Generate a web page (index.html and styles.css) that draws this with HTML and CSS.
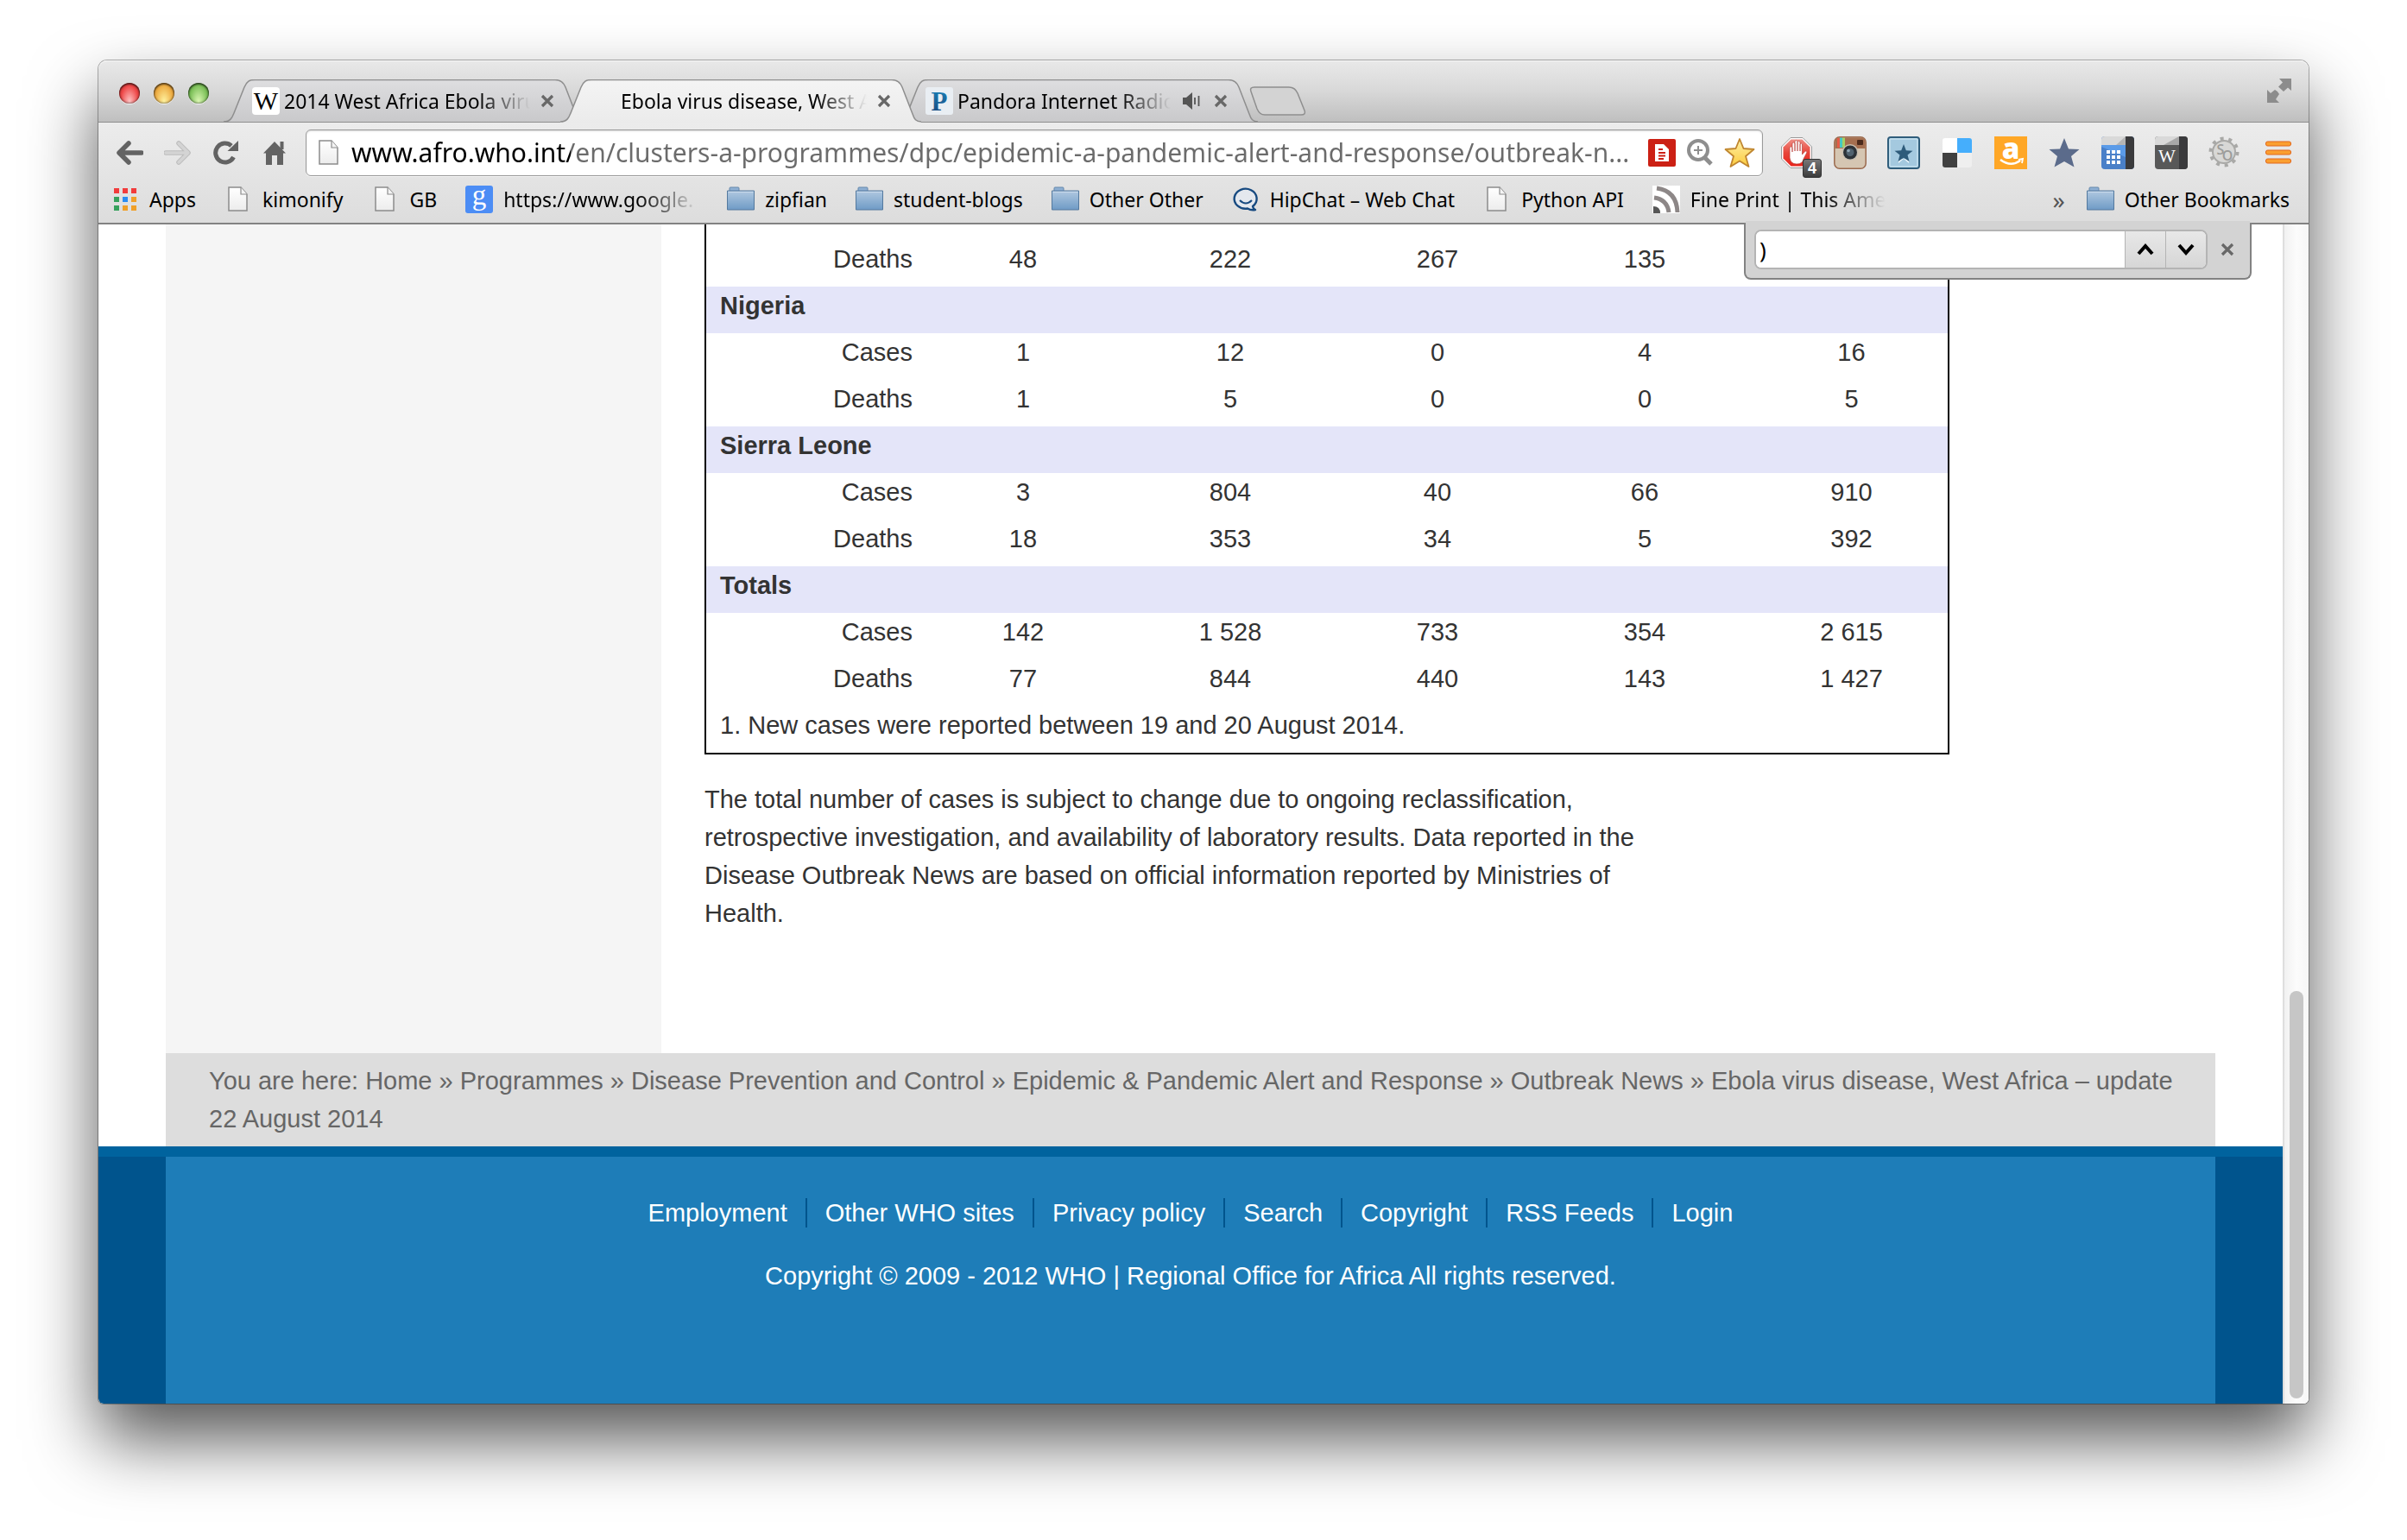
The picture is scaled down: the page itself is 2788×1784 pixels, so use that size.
FILE: index.html
```html
<!DOCTYPE html>
<html lang="en">
<head>
<meta charset="utf-8">
<title>Ebola virus disease, West Africa</title>
<link rel="stylesheet" href="styles.css">
</head>
<body>
<svg class="defs" width="0" height="0" aria-hidden="true">
  <defs>
    <linearGradient id="tabOff" x1="0" y1="0" x2="0" y2="1"><stop offset="0" stop-color="#dedee0"/><stop offset="1" stop-color="#c9c9cb"/></linearGradient>
    <linearGradient id="tabOn" x1="0" y1="0" x2="0" y2="1"><stop offset="0" stop-color="#f4f4f4"/><stop offset="1" stop-color="#ebebeb"/></linearGradient>
    <linearGradient id="folderFill" x1="0" y1="0" x2="0" y2="1"><stop offset="0" stop-color="#b0c8e0"/><stop offset="1" stop-color="#6f9bc6"/></linearGradient>
    <linearGradient id="pageFill" x1="0" y1="0" x2="0" y2="1"><stop offset="0" stop-color="#ffffff"/><stop offset="1" stop-color="#ececec"/></linearGradient>
    <linearGradient id="starFill" x1="0" y1="0" x2="0" y2="1"><stop offset="0" stop-color="#fff0a8"/><stop offset="1" stop-color="#fbcb3c"/></linearGradient>
    <linearGradient id="pandora" x1="0" y1="0" x2="0" y2="1"><stop offset="0" stop-color="#1a86bd"/><stop offset="1" stop-color="#1a4277"/></linearGradient>
    <linearGradient id="stopRed" x1="0" y1="0" x2="0" y2="1"><stop offset="0" stop-color="#ee8d85"/><stop offset=".5" stop-color="#e8453a"/><stop offset="1" stop-color="#e8231b"/></linearGradient>
    <symbol id="page" viewBox="0 0 32 32"><path d="M6 3h14l7 8v19H6z" transform="translate(-1 -1)" fill="url(#pageFill)" stroke="#8c8c8c" stroke-width="1.5"/><path d="M19 2v8h7" fill="#f4f4f4" stroke="#8c8c8c" stroke-width="1.2"/></symbol>
    <symbol id="folder" viewBox="0 0 32 32"><path d="M3 6V3q0-1 1-1h9q1 0 1 1v3" fill="#8fb0d3" stroke="#6487ab"/><path d="M.5 6h31v22H.5z" fill="url(#folderFill)" stroke="#54799e"/><path d="M1.500 7.500h29" stroke="#c9daeb"/></symbol>
    <symbol id="cross" viewBox="0 0 16 16"><path d="M2 2l12 12M14 2L2 14" stroke="#686868" stroke-width="3.200"/></symbol>
  </defs>
</svg>

<div class="window">
  <header class="chrome">
    <div class="tabstrip">
      <div class="lights">
        <button class="light red" aria-label="Close window"></button>
        <button class="light amber" aria-label="Minimize window"></button>
        <button class="light green" aria-label="Zoom window"></button>
      </div>
      <div class="tabs">
        <div class="tab">
          <svg class="tab-shape" viewBox="0 0 418 50" aria-hidden="true"><path d="M0 49C8 49 10 44 12 39L24 9C27 2 30 .5 36 .5H384C391 .5 394 4 396 9L408 40C410 46 412 49 418 49" fill="url(#tabOff)" stroke="#8e8e8e" stroke-width="1.500"/></svg>
          <svg class="favicon" viewBox="0 0 32 32" aria-hidden="true"><rect width="32" height="32" rx="4" fill="#fff"/><text x="16" y="26" text-anchor="middle" font-family="Liberation Serif, serif" font-size="30">W</text></svg>
          <span class="tab-title">2014 West Africa Ebola virus</span>
          <button class="tab-close" aria-label="Close tab"><svg viewBox="0 0 16 16"><use href="#cross"/></svg></button>
        </div>
        <div class="tab active">
          <svg class="tab-shape" viewBox="0 0 418 50" aria-hidden="true"><path d="M0 49C8 49 10 44 12 39L24 9C27 2 30 .5 36 .5H384C391 .5 394 4 396 9L408 40C410 46 412 49 418 49V50H0z" fill="url(#tabOn)"/><path d="M0 49C8 49 10 44 12 39L24 9C27 2 30 .5 36 .5H384C391 .5 394 4 396 9L408 40C410 46 412 49 418 49" fill="none" stroke="#8e8e8e" stroke-width="1.500"/></svg>
          <span class="favicon"></span>
          <span class="tab-title">Ebola virus disease, West Africa</span>
          <button class="tab-close" aria-label="Close tab"><svg viewBox="0 0 16 16"><use href="#cross"/></svg></button>
        </div>
        <div class="tab">
          <svg class="tab-shape" viewBox="0 0 418 50" aria-hidden="true"><path d="M0 49C8 49 10 44 12 39L24 9C27 2 30 .5 36 .5H384C391 .5 394 4 396 9L408 40C410 46 412 49 418 49" fill="url(#tabOff)" stroke="#8e8e8e" stroke-width="1.500"/></svg>
          <svg class="favicon" viewBox="0 0 32 32" aria-hidden="true"><rect width="32" height="32" rx="3" fill="#e9eef3"/><text x="16" y="27" text-anchor="middle" font-family="Liberation Serif, serif" font-weight="700" font-size="31" fill="url(#pandora)">P</text></svg>
          <span class="tab-title">Pandora Internet Radio</span>
          <svg class="speaker" viewBox="0 0 20 20" aria-label="Playing audio"><path d="M0 6h4l7-6v20l-7-6H0z" fill="#555"/><path d="M14 6v8M18.500 4v12" stroke="#555" stroke-width="1.800"/></svg>
          <button class="tab-close" aria-label="Close tab"><svg viewBox="0 0 16 16"><use href="#cross"/></svg></button>
        </div>
      </div>
      <button class="new-tab" aria-label="New tab"><svg viewBox="0 0 66 34"><path d="M6 1H46Q53 1 56 8L64 28Q66 33 60 33H18Q12 33 9 26L2 6Q0 1 6 1z" fill="#d3d3d3" stroke="#8e8e8e" stroke-width="1.500"/></svg></button>
      <button class="fullscreen" aria-label="Full screen"><svg viewBox="0 0 28 28"><path d="M14 0H28V14L24 10.500 19 15 13 9.500 18 4.500z" fill="#8c8c8c"/><path d="M14 28H0V13L4 17 9 13Q13 15 14 18L10 24z" fill="#8c8c8c"/></svg></button>
    </div>

    <div class="toolbar">
      <nav class="nav-buttons" aria-label="Navigation">
        <button class="tool" aria-label="Back"><svg viewBox="0 0 32 28"><path d="M15 3L4 14l11 11M5 14h25" fill="none" stroke="#636363" stroke-width="5.500" stroke-linecap="round" stroke-linejoin="round"/></svg></button>
        <button class="tool" aria-label="Forward"><svg viewBox="0 0 32 28"><path d="M17 3l11 11-11 11M27 14H2" fill="none" stroke="#bcbcbc" stroke-width="5.500" stroke-linecap="round" stroke-linejoin="round"/><path d="M17 3l11 11-11 11M27 14H2" fill="none" stroke="#d4d4d4" stroke-width="3.500" stroke-linecap="round" stroke-linejoin="round"/></svg></button>
        <button class="tool" aria-label="Reload"><svg viewBox="0 0 32 28"><path d="M24.500 19A11 11 0 1 1 22 5.800" fill="none" stroke="#636363" stroke-width="5"/><path d="M30 0v12H17.500z" fill="#636363"/></svg></button>
        <button class="tool" aria-label="Home"><svg viewBox="0 0 32 28"><path d="M16 1L29 14.500H26V28H19V17H13V28H6V14.500H3z" fill="#636363"/><path d="M22.500 1h4v9h-4z" fill="#636363"/></svg></button>
      </nav>
      <div class="omnibox">
        <svg class="site-icon" viewBox="0 0 32 32" aria-hidden="true"><use href="#page"/></svg>
        <input class="url" type="text" aria-label="Address" value="www.afro.who.int/en/clusters-a-programmes/dpc/epidemic-a-pandemic-alert-and-response/outbreak-n...">
        <svg class="omni-icon" viewBox="0 0 32 32" aria-hidden="true"><rect width="32" height="32" rx="2" fill="#cc2014"/><path d="M8 6h10l6 6v14H8z" fill="#fff"/><path d="M12 12h5M12 16h8M12 19.500h8M12 23h6" stroke="#cc2014" stroke-width="2"/></svg>
        <svg class="omni-icon" viewBox="0 0 32 32" aria-hidden="true"><circle cx="14" cy="13" r="11" fill="none" stroke="#8e8e8e" stroke-width="4"/><path d="M21 21l8 8" stroke="#8e8e8e" stroke-width="5"/><path d="M14 8v10M9 13h10" stroke="#8e8e8e" stroke-width="2"/></svg>
        <svg class="omni-star" viewBox="0 0 36 36" aria-hidden="true"><path d="M18 2l4.500 11 12 1-9.500 8 3.500 12L18 27.500 7.500 34 11 22 1.500 14l12-1z" fill="url(#starFill)" stroke="#c08630" stroke-width="1.800" stroke-linejoin="round"/></svg>
      </div>
      <div class="extensions">
        <button class="ext" aria-label="AdBlock"><svg viewBox="0 0 38 38"><path d="M12 1.500H26L36.500 12V26L26 36.500H12L1.500 26V12z" fill="#fff" stroke="#999"/><path d="M12.500 3.500H25.500L34.500 12.500V25.500L25.500 34.500H12.500L3.500 25.500V12.500z" fill="url(#stopRed)"/><path d="M11 13v12Q12 32 19 32T27 26L31 18.500Q29.500 16 28 18L25.500 21V9Q24 7 23 9V17 6.500Q21 4 20 6.500V17 5.500Q18 3.500 17 5.500V17 8Q15 6 14 8V18 13Q12 10.500 11 13z" fill="#fff" stroke="#b9413a" stroke-width=".7"/></svg><span class="badge">4</span></button>
        <button class="ext" aria-label="Instagram"><svg viewBox="0 0 38 38"><rect x=".8" y=".8" width="36.400" height="36.400" rx="6" fill="#d5c6b2" stroke="#9b6a4e" stroke-width="1.500"/><path d="M1.500 14V7q0-5.500 6-5.500h23q6 0 6 5.500v7z" fill="#a56f50"/><path d="M4 2h3v11H4z" fill="#e55a46"/><path d="M7 1.500h3V13H7z" fill="#46c8c4"/><path d="M10 1.500h3V13h-3z" fill="#a5d063"/><rect x="27" y="4" width="7" height="6" rx="1" fill="#4b2a1c"/><circle cx="19" cy="18.500" r="9.500" fill="#c7bfb2"/><circle cx="19" cy="18.500" r="8" fill="#2b3238"/><circle cx="19" cy="18.500" r="4.500" fill="#50626f"/><circle cx="17" cy="16.500" r="1.800" fill="#8fa6b5"/></svg></button>
        <button class="ext" aria-label="Bookmarks"><svg viewBox="0 0 38 38"><rect x="1" y="1" width="36" height="36" rx="3" fill="#a4c9df" stroke="#2f5d7b" stroke-width="2"/><rect x="3" y="3" width="32" height="32" rx="1" fill="none" stroke="#c5dfee" stroke-width="1.500"/><path d="M19 26l-6 5V26M19 26l6 5v-5" fill="#eaf4fa"/><path d="M19 9l2.800 7.300 7.700.4-6 4.800 2 7.500-6.500-4.200L12.500 29l2-7.500-6-4.800 7.700-.4z" fill="#2e5b7a"/></svg></button>
        <button class="ext" aria-label="Delicious"><svg viewBox="0 0 38 38"><path d="M5 2h14v17H2V5q0-3 3-3z" fill="#fff"/><path d="M19 2h14q3 0 3 3v14H19z" fill="#45aefc"/><path d="M2 19h17v17H5q-3 0-3-3z" fill="#404040"/><path d="M19 19h17v14q0 3-3 3H19z" fill="#efefef"/></svg></button>
        <button class="ext" aria-label="Amazon"><svg viewBox="0 0 38 38"><path d="M0 0h38v38H0z" fill="#ffa726"/><text x="19" y="26" text-anchor="middle" font-family="Open Sans, sans-serif" font-weight="800" font-size="33" fill="#fff">a</text><path d="M7 27q12 9 23 1" fill="none" stroke="#fff" stroke-width="2.500"/><path d="M28 27l5-1-1 5" fill="none" stroke="#fff" stroke-width="1.800"/></svg></button>
        <button class="ext" aria-label="Favorites"><svg viewBox="0 0 38 38"><path d="M19 2l5 12.500 12.500.5L27 23l3.500 12.500L19 29 7.500 35.500 11 23 1.500 15l12.500-.5z" fill="#5b6b8b"/></svg></button>
        <button class="ext" aria-label="Calendar"><svg viewBox="0 0 38 38"><rect width="38" height="38" rx="4" fill="#4a80c8"/><path d="M0 10h28v14L0 12z" fill="#5b9be8"/><path d="M4 0h24v10H0V4q0-4 4-4z" fill="#d9d9d9"/><path d="M17 10L28 0v10z" fill="#b5b5b5"/><path d="M28 0h6q4 0 4 4v30q0 4-4 4h-6z" fill="#3a3a3c"/><path d="M6 16h4v4H6zM12 16h4v4h-4zM18 16h4v4h-4zM6 22h4v4H6zM12 22h4v4h-4zM18 22h4v4h-4zM6 28h4v4H6zM12 28h4v4h-4zM18 28h4v4h-4z" fill="#fff"/></svg></button>
        <button class="ext" aria-label="Wikipedia"><svg viewBox="0 0 38 38"><rect width="38" height="38" rx="4" fill="#585858"/><path d="M4 0h24v10H0V4q0-4 4-4z" fill="#d9d9d9"/><path d="M10 10L28 0v10z" fill="#a8a8a8"/><path d="M28 0h6q4 0 4 4v30q0 4-4 4h-6z" fill="#3a3a3c"/><text x="14" y="30" text-anchor="middle" font-family="Liberation Serif, serif" font-size="21" fill="#fff">W</text></svg></button>
        <button class="ext" aria-label="Settings"><svg viewBox="0 0 38 38"><circle cx="18" cy="18" r="15.500" fill="none" stroke="#a9a9a7" stroke-width="4" stroke-dasharray="4 5.740"/><circle cx="18" cy="18" r="13" fill="#d8d8d6" stroke="#a9a9a7" stroke-width="2"/><text x="14" y="21" text-anchor="middle" font-family="Open Sans, sans-serif" font-weight="600" font-size="16" fill="#9c9c9a">S</text><text x="22" y="28" text-anchor="middle" font-family="Open Sans, sans-serif" font-weight="600" font-size="16" fill="#9c9c9a">O</text></svg></button>
      </div>
      <button class="menu" aria-label="Menu"><svg viewBox="0 0 30 28"><rect x=".5" y="1" width="29" height="5" rx="2" fill="#fa9f30" stroke="#e2661c"/><rect x=".5" y="11" width="29" height="5" rx="2" fill="#fa9f30" stroke="#e2661c"/><rect x=".5" y="21" width="29" height="5" rx="2" fill="#fa9f30" stroke="#e2661c"/></svg></button>
    </div>

    <nav class="bookmarks" aria-label="Bookmarks">
      <a class="bookmark" href="#"><svg viewBox="0 0 32 32" aria-hidden="true"><path d="M3 3h6v6H3zM13 3h6v6h-6zM23 3h6v6h-6z" fill="#f23b3b"/><path d="M3 13h6v6H3zM3 23h6v6H3z" fill="#36a15c"/><path d="M13 13h6v6h-6z" fill="#2b8cf2"/><path d="M23 13h6v6h-6zM13 23h6v6h-6zM23 23h6v6h-6z" fill="#f0a029"/></svg>Apps</a>
      <a class="bookmark" href="#"><svg viewBox="0 0 32 32" aria-hidden="true"><use href="#page"/></svg>kimonify</a>
      <a class="bookmark" href="#"><svg viewBox="0 0 32 32" aria-hidden="true"><use href="#page"/></svg>GB</a>
      <a class="bookmark" href="#"><svg viewBox="0 0 32 32" aria-hidden="true"><rect width="32" height="32" rx="3" fill="#4c8df5"/><text x="16" y="22" text-anchor="middle" font-family="Liberation Serif, serif" font-size="33" fill="#fff">g</text></svg><span class="fade">https://www.google.</span></a>
      <a class="bookmark" href="#"><svg viewBox="0 0 32 32" aria-hidden="true"><use href="#folder"/></svg>zipfian</a>
      <a class="bookmark" href="#"><svg viewBox="0 0 32 32" aria-hidden="true"><use href="#folder"/></svg>student-blogs</a>
      <a class="bookmark" href="#"><svg viewBox="0 0 32 32" aria-hidden="true"><use href="#folder"/></svg>Other Other</a>
      <a class="bookmark" href="#"><svg viewBox="0 0 32 32" aria-hidden="true"><path d="M24 24A13 11.500 0 1 0 18 26.500Q22 29 27 28 24.500 27 24 24z" fill="#e4e8ee" stroke="#174a80" stroke-width="2.400" stroke-linejoin="round"/><path d="M9 17q7 7 14 0" fill="none" stroke="#174a80" stroke-width="2"/></svg>HipChat – Web Chat</a>
      <a class="bookmark" href="#"><svg viewBox="0 0 32 32" aria-hidden="true"><use href="#page"/></svg>Python API</a>
      <a class="bookmark" href="#"><svg viewBox="0 0 32 32" aria-hidden="true"><path d="M0 0h32v32H0z" fill="#fff"/><path d="M5 3Q28 6 29 31M2 14Q17 16 19 31" fill="none" stroke="#8d8787" stroke-width="5"/><path d="M1 24q8 0 8 8H1z" fill="#555"/></svg><span class="fade">Fine Print | This American</span></a>
      <button class="overflow" aria-label="More bookmarks">»</button>
      <a class="bookmark" href="#"><svg viewBox="0 0 32 32" aria-hidden="true"><use href="#folder"/></svg>Other Bookmarks</a>
    </nav>

    <form class="findbar" role="search">
      <div class="find-group">
        <input class="find-input" type="text" aria-label="Find in page" value=")">
        <button class="find-step" type="button" aria-label="Previous"><svg viewBox="0 0 20 14"><path d="M2 12l8-9 8 9" fill="none" stroke="#000" stroke-width="4"/></svg></button>
        <button class="find-step" type="button" aria-label="Next"><svg viewBox="0 0 20 14"><path d="M2 2l8 9 8-9" fill="none" stroke="#000" stroke-width="4"/></svg></button>
      </div>
      <button class="find-close" type="button" aria-label="Close find bar"><svg viewBox="0 0 16 16"><use href="#cross"/></svg></button>
    </form>
  </header>

  <div class="viewport">
    <div class="site">
      <div class="columns">
        <aside class="sidebar"></aside>
        <main class="article">
          <table class="figures">
            <tbody>
              <tr class="first"><th scope="row">Deaths</th><td>48</td><td>222</td><td>267</td><td>135</td><td></td></tr>
              <tr class="country"><th scope="rowgroup" colspan="6">Nigeria</th></tr>
              <tr><th scope="row">Cases</th><td>1</td><td>12</td><td>0</td><td>4</td><td>16</td></tr>
              <tr><th scope="row">Deaths</th><td>1</td><td>5</td><td>0</td><td>0</td><td>5</td></tr>
              <tr class="country"><th scope="rowgroup" colspan="6">Sierra Leone</th></tr>
              <tr><th scope="row">Cases</th><td>3</td><td>804</td><td>40</td><td>66</td><td>910</td></tr>
              <tr><th scope="row">Deaths</th><td>18</td><td>353</td><td>34</td><td>5</td><td>392</td></tr>
              <tr class="country"><th scope="rowgroup" colspan="6">Totals</th></tr>
              <tr><th scope="row">Cases</th><td>142</td><td>1 528</td><td>733</td><td>354</td><td>2 615</td></tr>
              <tr><th scope="row">Deaths</th><td>77</td><td>844</td><td>440</td><td>143</td><td>1 427</td></tr>
              <tr class="note"><td colspan="6">1. New cases were reported between 19 and 20 August 2014.</td></tr>
            </tbody>
          </table>
          <p class="remark">The total number of cases is subject to change due to ongoing reclassification, retrospective investigation, and availability of laboratory results. Data reported in the Disease Outbreak News are based on official information reported by Ministries of Health.</p>
        </main>
      </div>
      <nav class="breadcrumb" aria-label="Breadcrumb">You are here: <a href="#">Home</a> » <a href="#">Programmes</a> » <a href="#">Disease Prevention and Control</a> » <a href="#">Epidemic &amp; Pandemic Alert and Response</a> » <a href="#">Outbreak News</a> » Ebola virus disease, West Africa – update 22 August 2014</nav>
      <footer class="footer">
        <div class="footer-inner">
          <ul class="footer-links">
            <li><a href="#">Employment</a></li>
            <li><a href="#">Other WHO sites</a></li>
            <li><a href="#">Privacy policy</a></li>
            <li><a href="#">Search</a></li>
            <li><a href="#">Copyright</a></li>
            <li><a href="#">RSS Feeds</a></li>
            <li><a href="#">Login</a></li>
          </ul>
          <p class="copyright">Copyright © 2009 - 2012 WHO | Regional Office for Africa All rights reserved.</p>
        </div>
      </footer>
    </div>
    <div class="scrollbar"><div class="thumb"></div></div>
  </div>
</div>
</body>
</html>
```

FILE: styles.css
```css
* { box-sizing: border-box; }

body {
  margin: 0;
  padding: 70px 114px 158px;
  background: #fff;
  font-family: "Liberation Sans", Arial, sans-serif;
  font-size: 29px;
  line-height: 44px;
  color: #333;
}

button {
  display: flex;
  align-items: center;
  justify-content: center;
  padding: 0;
  border: 0;
  background: none;
  font: inherit;
}

svg { display: block; flex: none; }
a { color: inherit; text-decoration: none; }
.defs { position: absolute; }

.window {
  border-radius: 10px 10px 6px 6px;
  box-shadow: 0 0 0 1px rgba(0, 0, 0, .3), 0 42px 80px rgba(0, 0, 0, .66);
}

/* Browser chrome */
.chrome {
  position: relative;
  z-index: 1;
  border-bottom: 2px solid #828282;
  border-radius: 10px 10px 0 0;
  background: linear-gradient(#ececec, #d3d3d3) 0 72px no-repeat;
  font-family: "Noto Sans", "Open Sans", sans-serif;
  font-size: 23px;
  line-height: 32px;
  color: #000;
}

.tabstrip {
  display: flex;
  align-items: flex-end;
  height: 72px;
  padding: 0 20px 0 24px;
  border-bottom: 1px solid #8e8e8e;
  border-radius: 10px 10px 0 0;
  background: linear-gradient(#e9e9e9, #d8d8d8 50%, #bfbfbf);
  box-shadow: inset 0 1px #f8f8f8;
}

.lights { display: flex; gap: 16px; margin: 0 17px 21px 0; }
.light {
  width: 24px;
  height: 24px;
  border-radius: 50%;
  box-shadow: inset 0 2px 2px rgba(0, 0, 0, .45), inset 0 0 2px 1px rgba(0, 0, 0, .4), 0 1px #f2f2f2;
}
.red { background: radial-gradient(ellipse at 50% 90%, #ffc4c4, #ee4848 60%, #c92d2d); }
.amber { background: radial-gradient(ellipse at 50% 90%, #fff3a0, #eeae45 60%, #c07a22); }
.green { background: radial-gradient(ellipse at 50% 90%, #dcf8b4, #7fc25b 60%, #4b8f30); }

.tabs { display: flex; margin-bottom: -1px; }
.tab {
  position: relative;
  isolation: isolate;
  display: flex;
  align-items: center;
  width: 418px;
  height: 50px;
  padding: 0 31px 0 33px;
}
.tab + .tab { margin-left: -28px; }
.tab.active { z-index: 1; }
.tab-shape { position: absolute; inset: 0; width: 418px; height: 50px; z-index: -1; }
.favicon { flex: none; width: 32px; height: 32px; margin-right: 5px; }
.tab-title {
  flex: 1;
  min-width: 0;
  overflow: hidden;
  white-space: nowrap;
  mask-image: linear-gradient(90deg, #000 calc(100% - 60px), transparent);
}
.speaker { width: 20px; height: 20px; margin: 0 4px 0 14px; }
.tab-close { width: 24px; height: 24px; margin-left: 8px; }
.tab-close svg { width: 16px; height: 16px; }

.new-tab { width: 66px; height: 34px; margin: 0 0 7px -10px; }
.new-tab svg { width: 66px; height: 34px; }
.fullscreen { width: 28px; height: 28px; margin: 0 0 22px auto; }
.fullscreen svg { width: 28px; height: 28px; }

.toolbar {
  display: flex;
  align-items: center;
  height: 69px;
  padding: 0 20px;
}
.nav-buttons { display: flex; gap: 24px; width: 220px; }
.tool svg { width: 32px; height: 28px; }
.omnibox {
  flex: 1;
  display: flex;
  align-items: center;
  min-width: 0;
  height: 54px;
  padding: 0 8px 0 10px;
  border: 1px solid #9a9a9a;
  border-radius: 6px;
  background: #fff;
  box-shadow: inset 0 1px 2px rgba(0, 0, 0, .15), 0 1px #f4f4f4;
}
.site-icon { width: 32px; height: 32px; margin-right: 10px; }
.url {
  flex: 1;
  min-width: 0;
  height: 44px;
  padding: 0;
  border: 0;
  outline: 0;
  font: 30px/44px "Noto Sans", "Open Sans", sans-serif;
  color: #666;
  background: linear-gradient(90deg, #000 254px, #6b6b6b 254px);
  background-clip: text;
  -webkit-background-clip: text;
  -webkit-text-fill-color: transparent;
}
.omni-icon { width: 32px; height: 32px; margin-right: 12px; }
.omni-star { width: 36px; height: 36px; }

.extensions { display: flex; gap: 24px; margin-left: 20px; }
.ext { position: relative; width: 38px; height: 38px; }
.ext svg { width: 38px; height: 38px; }
.badge {
  position: absolute;
  right: -10px;
  bottom: -10px;
  width: 22px;
  height: 22px;
  border: 1px solid #333;
  border-radius: 3px;
  background: linear-gradient(#777, #3c3c3c);
  color: #fff;
  font: bold 18px/20px "Liberation Sans", Arial, sans-serif;
  text-align: center;
}
.menu { margin-left: 28px; }
.menu svg { width: 30px; height: 28px; }

.bookmarks {
  display: flex;
  align-items: center;
  gap: 33px;
  height: 47px;
  padding: 0 22px 8px 15px;
  white-space: nowrap;
}
.bookmark { display: flex; align-items: center; gap: 12px; }
.bookmark svg { width: 32px; height: 32px; }
.fade {
  width: 226px;
  overflow: hidden;
  mask-image: linear-gradient(90deg, #000 calc(100% - 70px), transparent);
}
.overflow { margin-left: auto; margin-right: -8px; color: #555; font-size: 28px; }

/* Find bar hangs below the chrome */
.findbar {
  position: absolute;
  top: 100%;
  right: 66px;
  display: flex;
  align-items: center;
  width: 588px;
  height: 66px;
  padding: 0 18px 3px 10px;
  border: 2px solid #828282;
  border-top: 0;
  border-radius: 0 0 8px 8px;
  background: #d3d3d3;
}
/* Hides the chrome's bottom rule where the find bar joins it */
.findbar::before {
  content: "";
  position: absolute;
  inset: -2px 0 auto;
  height: 2px;
  background: #d3d3d3;
}
.find-group {
  flex: 1;
  display: flex;
  height: 46px;
  border: 2px solid #b4b4b4;
  border-radius: 8px;
  background: #fff;
  overflow: hidden;
}
.find-input {
  flex: 1;
  min-width: 0;
  padding: 0 4px;
  border: 0;
  outline: 0;
  background: #fff;
  font: 26px/42px "Noto Sans", "Open Sans", sans-serif;
}
.find-step { width: 47px; border-left: 1px solid #b4b4b4; background: linear-gradient(#e8e8e8, #d6d6d6); }
.find-step svg { width: 20px; height: 14px; }
.find-close { width: 16px; margin-left: 15px; }
.find-close svg { width: 16px; height: 16px; }

/* Page */
.viewport {
  display: flex;
  border-radius: 0 0 6px 6px;
  background: #fff;
  overflow: hidden;
}
.site { flex: 1; min-width: 0; }
.columns { display: grid; grid-template-columns: 574px 1fr; margin: 0 78px; }
.sidebar { background: #f5f5f5; }
.article { padding: 0 0 140px 50px; }

.figures {
  width: 1442px;
  table-layout: fixed;
  border: 2px solid #000;
  border-top: 0;
  border-collapse: collapse;
}
.figures th, .figures td {
  padding: 0 0 10px 16px;
  font-weight: 400;
  text-align: center;
}
.figures th { text-align: right; }
.figures .first th, .figures .first td { padding-top: 18px; }
.figures .country { background: #e4e5f9; }
.figures .country th { font-weight: 700; text-align: left; }
.figures .note td { text-align: left; }

.remark { width: 1110px; margin: 30px 0 0; }

.breadcrumb {
  margin: 0 78px;
  padding: 10px 16px 10px 50px;
  background: #ddd;
  color: #666;
}

.footer { padding: 0 78px; border-top: 12px solid #00639e; background: #00548d; color: #fff; }
.footer-inner { padding: 48px 0 126px; background: #1e7db8; }
.footer-links {
  display: flex;
  justify-content: center;
  margin: 0 0 34px;
  padding: 0;
  list-style: none;
  line-height: 34px;
}
.footer-links li + li { margin-left: 21px; padding-left: 21px; border-left: 2px solid #00548d; }
.copyright { margin: 0; text-align: center; }

.scrollbar {
  display: flex;
  align-items: flex-end;
  justify-content: center;
  width: 30px;
  padding: 0 0 6px;
  border-left: 2px solid #dedede;
  background: linear-gradient(90deg, #f1f1f1, #fcfcfc 50%, #f6f6f6);
}
.thumb { width: 16px; height: 472px; border-radius: 8px; background: #c6c6c6; }
```
